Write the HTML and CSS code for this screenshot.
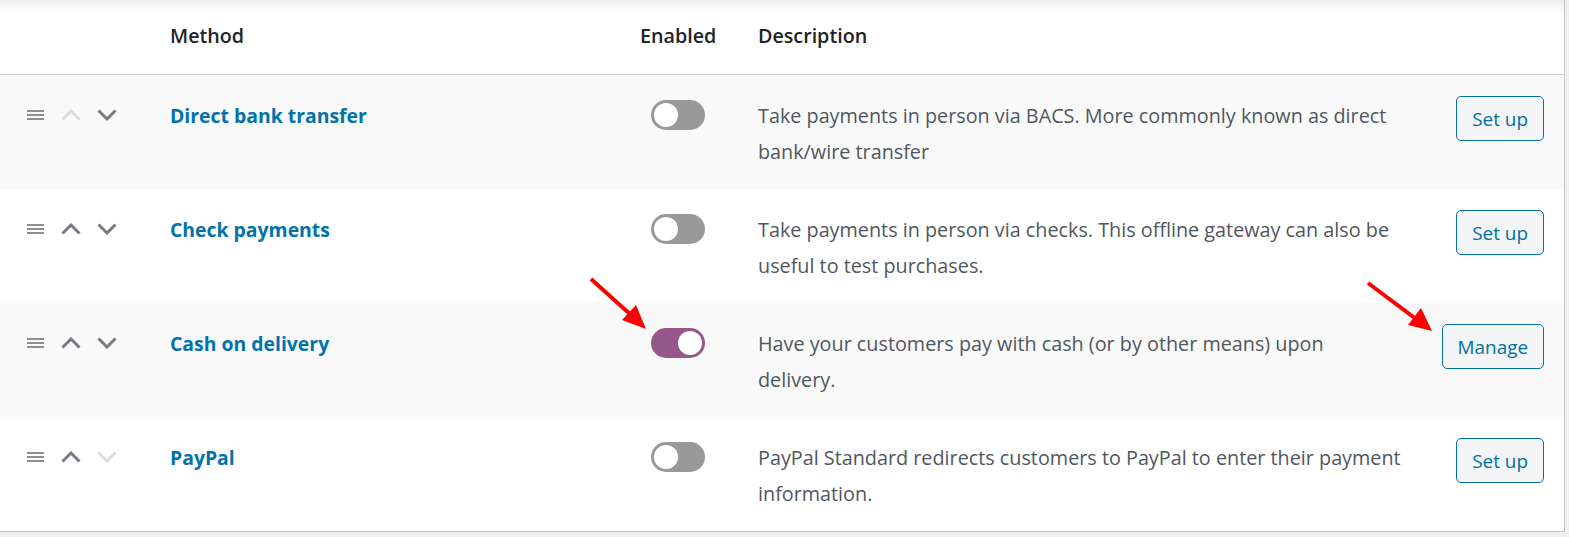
FILE: index.html
```html
<!DOCTYPE html>
<html>
<head>
<meta charset="utf-8">
<link rel="stylesheet" href="styles.css">
</head>
<body>
<div class="page">
  <div class="table">
    <div class="row head">
      <div class="c-sort"></div>
      <div class="c-name">Method</div>
      <div class="c-enabled">Enabled</div>
      <div class="c-desc">Description</div>
      <div class="c-action"></div>
    </div>

    <div class="row striped">
      <div class="c-sort">
        <span class="ic burger"><svg width="17" height="10" viewBox="0 0 17 10"><path d="M0 1h17M0 5h17M0 9h17" stroke="#8c8f94" stroke-width="2"/></svg></span>
        <span class="ic"><svg width="20" height="12" viewBox="0 0 20 12"><path d="M1.5 10.5L10 2l8.5 8.5" fill="none" stroke="#dcdcde" stroke-width="3"/></svg></span>
        <span class="ic"><svg width="20" height="12" viewBox="0 0 20 12"><path d="M1.5 1.5L10 10l8.5-8.5" fill="none" stroke="#787c82" stroke-width="3"/></svg></span>
      </div>
      <div class="c-name"><a class="name">Direct bank transfer</a></div>
      <div class="c-enabled"><span class="toggle"><span class="knob"></span></span></div>
      <div class="c-desc">Take payments in person via BACS. More commonly known as direct bank/wire transfer</div>
      <div class="c-action"><button class="btn">Set up</button></div>
    </div>

    <div class="row">
      <div class="c-sort">
        <span class="ic burger"><svg width="17" height="10" viewBox="0 0 17 10"><path d="M0 1h17M0 5h17M0 9h17" stroke="#8c8f94" stroke-width="2"/></svg></span>
        <span class="ic"><svg width="20" height="12" viewBox="0 0 20 12"><path d="M1.5 10.5L10 2l8.5 8.5" fill="none" stroke="#787c82" stroke-width="3"/></svg></span>
        <span class="ic"><svg width="20" height="12" viewBox="0 0 20 12"><path d="M1.5 1.5L10 10l8.5-8.5" fill="none" stroke="#787c82" stroke-width="3"/></svg></span>
      </div>
      <div class="c-name"><a class="name">Check payments</a></div>
      <div class="c-enabled"><span class="toggle"><span class="knob"></span></span></div>
      <div class="c-desc">Take payments in person via checks. This offline gateway can also be useful to test purchases.</div>
      <div class="c-action"><button class="btn">Set up</button></div>
    </div>

    <div class="row striped">
      <div class="c-sort">
        <span class="ic burger"><svg width="17" height="10" viewBox="0 0 17 10"><path d="M0 1h17M0 5h17M0 9h17" stroke="#8c8f94" stroke-width="2"/></svg></span>
        <span class="ic"><svg width="20" height="12" viewBox="0 0 20 12"><path d="M1.5 10.5L10 2l8.5 8.5" fill="none" stroke="#787c82" stroke-width="3"/></svg></span>
        <span class="ic"><svg width="20" height="12" viewBox="0 0 20 12"><path d="M1.5 1.5L10 10l8.5-8.5" fill="none" stroke="#787c82" stroke-width="3"/></svg></span>
      </div>
      <div class="c-name"><a class="name">Cash on delivery</a></div>
      <div class="c-enabled"><span class="toggle on"><span class="knob"></span></span></div>
      <div class="c-desc">Have your customers pay with cash (or by other means) upon delivery.</div>
      <div class="c-action"><button class="btn">Manage</button></div>
    </div>

    <div class="row">
      <div class="c-sort">
        <span class="ic burger"><svg width="17" height="10" viewBox="0 0 17 10"><path d="M0 1h17M0 5h17M0 9h17" stroke="#8c8f94" stroke-width="2"/></svg></span>
        <span class="ic"><svg width="20" height="12" viewBox="0 0 20 12"><path d="M1.5 10.5L10 2l8.5 8.5" fill="none" stroke="#787c82" stroke-width="3"/></svg></span>
        <span class="ic"><svg width="20" height="12" viewBox="0 0 20 12"><path d="M1.5 1.5L10 10l8.5-8.5" fill="none" stroke="#dcdcde" stroke-width="3"/></svg></span>
      </div>
      <div class="c-name"><a class="name">PayPal</a></div>
      <div class="c-enabled"><span class="toggle"><span class="knob"></span></span></div>
      <div class="c-desc">PayPal Standard redirects customers to PayPal to enter their payment information.</div>
      <div class="c-action"><button class="btn">Set up</button></div>
    </div>

    <svg class="arrows" width="1569" height="537" viewBox="0 0 1569 537">
      <line x1="591" y1="279" x2="631" y2="315" stroke="#ff0000" stroke-width="4"/>
      <polygon points="646,329 622,320 636,305" fill="#ff0000"/>
      <line x1="1368" y1="283" x2="1416" y2="319" stroke="#ff0000" stroke-width="4"/>
      <polygon points="1432,331 1408,325 1421,308" fill="#ff0000"/>
    </svg>
  </div>
</div>
</body>
</html>
```

FILE: styles.css
```css
* { box-sizing: border-box; }
html, body { margin: 0; padding: 0; }
body {
  background: #f0f0f1;
  font-family: "Open Sans", "Noto Sans", sans-serif;
  color: #50575e;
  width: 1569px;
  height: 537px;
  overflow: hidden;
}
.page { padding-bottom: 6px; }
.table {
  position: relative;
  width: 1565px;
  background: #fff;
  border-right: 1px solid #c3c4c7;
  border-bottom: 1px solid #c3c4c7;
}
.row {
  display: grid;
  grid-template-columns: 170px 470px 118px 645px 1fr;
  height: 114px;
  align-items: start;
  font-size: 19.8px;
}
.row.striped { background: #f9f9f9; }
.row.head {
  height: 75px;
  align-items: center;
  border-bottom: 1px solid #ccd0d4;
  background: linear-gradient(#ececec 0px, #fafafa 8px, #fff 16px);
  color: #1d2327;
  font-weight: 600;
  font-size: 19.7px;
}
.row.head > div { padding-top: 0; line-height: 24px; margin-top: -2px; }
.c-sort {
  display: flex;
  align-items: center;
  padding-left: 27px;
  height: 24px;
  margin-top: 28px;
}
.row.head .c-sort { margin-top: 0; }
.ic { display: flex; align-items: center; }
.burger { margin-right: 17px; }
.ic:nth-child(2) { margin-right: 16px; }
.c-name { padding-top: 28px; line-height: 26px; }
.name {
  color: #0073aa;
  font-weight: 700;
  font-size: 19.4px;
  text-decoration: none;
}
.c-enabled { padding-left: 11px; padding-top: 25px; }
.row.head .c-enabled { padding-left: 0; }
.toggle {
  display: flex;
  align-items: center;
  width: 54px;
  height: 30px;
  border-radius: 15px;
  background: #999;
  padding: 3px;
}
.toggle .knob {
  width: 24px;
  height: 24px;
  border-radius: 50%;
  background: #fff;
}
.toggle.on { background: #96588a; justify-content: flex-end; }
.c-desc {
  padding-top: 23px;
  line-height: 36px;
}
.c-action {
  display: flex;
  justify-content: flex-end;
  padding-right: 20px;
  padding-top: 21px;
}
.btn {
  font-family: inherit;
  font-size: 18.9px;
  color: #0071a1;
  background: #f3f5f6;
  border: 1.5px solid #0071a1;
  border-radius: 5px;
  height: 45px;
  padding: 2px 15px 0;
  line-height: 1;
}
.arrows {
  position: absolute;
  left: 0;
  top: 0;
  pointer-events: none;
}
```
